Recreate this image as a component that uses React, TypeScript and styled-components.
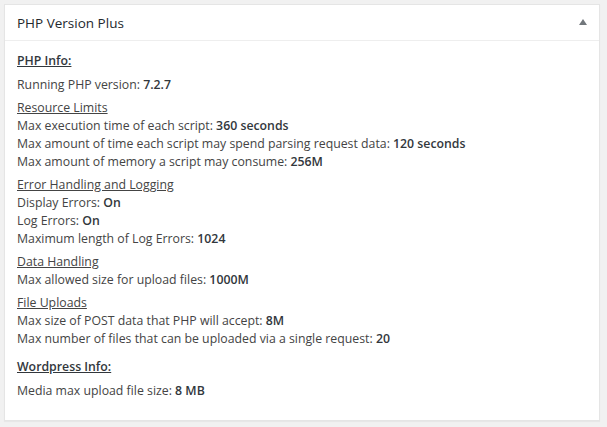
import React from "react";
import styled, { createGlobalStyle } from "styled-components";

const Global = createGlobalStyle`
  html, body { margin: 0; padding: 0; background: #f1f1f1; }
  body { font-family: "Open Sans", "Noto Sans", sans-serif; }
`;

const Page = styled.div`
  padding: 4px 7px 6px 4px;
`;

const Postbox = styled.section`
  background: #fff;
  border: 1px solid #e5e5e5;
  box-shadow: 0 1px 1px rgba(0, 0, 0, 0.04);
  height: 417px;
  box-sizing: border-box;
  display: flex;
  flex-direction: column;
`;

const Header = styled.header`
  display: flex;
  align-items: center;
  justify-content: space-between;
  height: 35px;
  border-bottom: 1px solid #eee;
  padding: 0 12px 0 12px;
`;

const Title = styled.h2`
  margin: 0;
  font-size: 13.5px;
  font-weight: 400;
  color: #23282d;
`;

const Toggle = styled.svg`
  width: 8px;
  height: 6px;
  margin-bottom: 1px;
`;

const Body = styled.div`
  padding: 11px 12px 12px;
  display: flex;
  flex-direction: column;
  font-size: 12.3px;
  line-height: 18px;
  color: #444;
`;

const Heading = styled.div<{ $top?: number }>`
  font-weight: 600;
  color: #32373c;
  text-decoration: underline;
  margin: ${(p) => p.$top ?? 0}px 0 6px;
`;

const Group = styled.div`
  display: flex;
  flex-direction: column;
  margin-bottom: 5px;
`;

const SubTitle = styled.span`
  text-decoration: underline;
`;

const Line = styled.span``;

const Value = styled.b`
  font-weight: 600;
  color: #32373c;
`;

type Row = [string, string];

const groups: { title?: string; rows: Row[] }[] = [
  { rows: [["Running PHP version: ", "7.2.7"]] },
  {
    title: "Resource Limits",
    rows: [
      ["Max execution time of each script: ", "360 seconds"],
      ["Max amount of time each script may spend parsing request data: ", "120 seconds"],
      ["Max amount of memory a script may consume: ", "256M"],
    ],
  },
  {
    title: "Error Handling and Logging",
    rows: [
      ["Display Errors: ", "On"],
      ["Log Errors: ", "On"],
      ["Maximum length of Log Errors: ", "1024"],
    ],
  },
  {
    title: "Data Handling",
    rows: [["Max allowed size for upload files: ", "1000M"]],
  },
  {
    title: "File Uploads",
    rows: [
      ["Max size of POST data that PHP will accept: ", "8M"],
      ["Max number of files that can be uploaded via a single request: ", "20"],
    ],
  },
];

export default function App() {
  return (
    <>
      <Global />
      <Page>
        <Postbox>
          <Header>
            <Title>PHP Version Plus</Title>
            <Toggle viewBox="0 0 8 6">
              <polygon points="4,0 8,6 0,6" fill="#72777c" />
            </Toggle>
          </Header>
          <Body>
            <Heading>PHP Info:</Heading>
            {groups.map((g, i) => (
              <Group key={i}>
                {g.title && <SubTitle>{g.title}</SubTitle>}
                {g.rows.map(([label, value], j) => (
                  <Line key={j}>
                    {label}
                    <Value>{value}</Value>
                  </Line>
                ))}
              </Group>
            ))}
            <Heading $top={5}>Wordpress Info:</Heading>
            <Group>
              <Line>
                Media max upload file size: <Value>8 MB</Value>
              </Line>
            </Group>
          </Body>
        </Postbox>
      </Page>
    </>
  );
}
